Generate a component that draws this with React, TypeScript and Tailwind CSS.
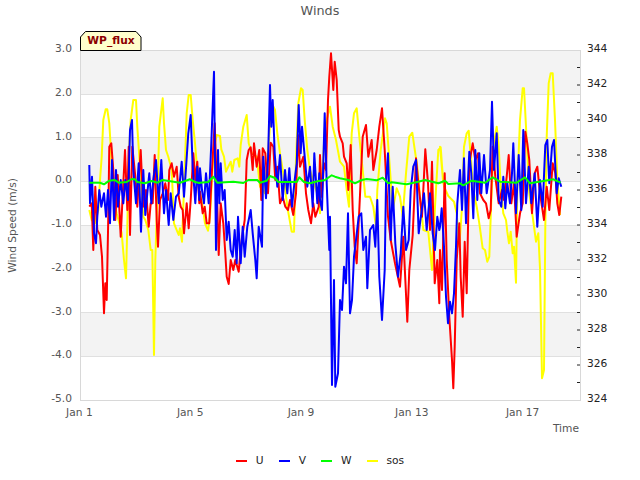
// Winds chart: traces are read off the picture in four panels (zoomed 3x)
type Panel = { x0: number; y0: number; pts: number[] };

const toPoints = (panels: Panel[]) =>
  panels
    .flatMap((p) => {
      const out: string[] = [];
      for (let i = 0; i < p.pts.length; i += 2) {
        out.push(`${(p.x0 + p.pts[i] / 3).toFixed(1)},${(p.y0 + p.pts[i + 1] / 3).toFixed(1)}`);
      }
      return out;
    })
    .join(' ');

const sos = toPoints([
  { x0: 80, y0: 60, pts: [28,450,35,480,45,490,55,450,60,360,65,290,70,180,77,148,82,148,88,190,92,260,96,330,102,420,110,460,118,490,125,520,132,600,138,655,142,500,146,300,152,180,160,120,168,120,172,200,178,290,184,380,190,470,196,480,205,510,212,570,217,570,222,885,226,600,232,420,238,200,248,115,252,190,258,270,265,290,275,330,282,490,288,505,296,525,300,505,306,545,310,440,316,280,320,160,326,105,332,105,338,180,345,250,352,330,358,400] },
  { x0: 200, y0: 60, pts: [0,400,8,440,15,490,24,512,30,470,36,350,42,260,50,225,60,228,64,268,72,290,78,335,85,320,92,305,97,335,103,300,113,295,118,320,122,255,130,200,140,165,146,250,155,280,170,290,180,380,195,400,215,130,225,150,232,220,240,280,250,340,262,440,275,515,282,515,288,300,295,130,303,85,308,90,314,180,322,270,330,330,345,380,358,420] },
  { x0: 320, y0: 50, pts: [0,490,5,400,15,230,30,170,38,230,48,270,60,335,72,350,80,420,87,470,95,250,102,190,110,175,118,260,128,360,136,440,150,440,160,470,168,530,172,420,182,300,195,205,200,220,210,360,218,480,230,415,240,440,248,500,258,370,268,260,277,248,283,290,292,350,300,440,310,540,325,545,336,660,345,470,355,300,362,292,370,400] },
  { x0: 440, y0: 60, pts: [0,260,5,310,12,380,25,408,42,425,50,460,58,560,66,440,72,260,80,220,86,212,92,290,100,390,110,440,118,490,128,565,135,570,142,605,148,590,152,470,160,260,170,200,176,260,182,380,190,460,198,480,202,515,207,550,212,515,218,580,222,560,228,668,232,380,240,180,248,85,252,85,258,200,268,400,278,470,288,545,295,520,300,625,306,955,312,930,316,500,320,230,326,70,332,40,338,40,345,180,352,360,360,465] },
]);

const windU = toPoints([
  { x0: 80, y0: 60, pts: [28,440,35,430,40,570,46,380,52,510,60,525,66,590,72,760,76,670,80,720,85,470,88,260,94,250,100,330,106,480,113,345,122,530,127,430,135,270,142,450,146,260,150,525,157,260,165,340,172,440,182,270,190,440,198,390,206,500,212,430,218,430,224,285,230,480,234,560,240,420,248,400,256,370,264,420,268,330,275,310,282,350,290,320,296,410,302,440,308,450,312,520,320,430,326,505,332,420,340,280,346,360,352,305,358,430] },
  { x0: 200, y0: 60, pts: [0,395,8,460,14,440,20,490,28,490,36,330,44,190,50,370,56,585,62,430,70,490,76,580,80,650,86,672,92,600,100,630,106,600,116,635,125,540,134,480,140,300,146,270,152,262,158,330,162,250,170,320,178,270,184,420,188,265,196,280,204,400,212,248,220,260,226,360,232,320,240,430,248,410,256,440,264,450,270,420,280,465,288,400,294,225,300,320,310,290,318,400,325,450,333,490,340,430,346,470,356,440] },
  { x0: 320, y0: 50, pts: [0,315,5,440,12,340,18,360,24,150,28,80,33,10,40,120,44,35,50,90,56,240,60,260,68,280,72,320,80,340,85,420,92,285,98,480,104,590,110,640,118,480,128,260,138,225,145,320,155,270,160,360,170,300,178,230,186,175,194,300,204,500,212,570,225,640,240,710,250,560,262,815,268,660,278,555,288,325,296,410,306,500,316,298,324,400,330,540,336,335,344,700,352,630,358,760] },
  { x0: 440, y0: 60, pts: [0,570,6,690,14,340,20,600,28,770,36,900,40,985,44,860,50,600,58,490,62,650,68,770,74,545,80,700,88,310,98,250,106,300,114,280,120,400,130,420,138,430,146,475,152,450,158,260,166,350,176,430,186,390,192,420,200,350,206,285,214,430,222,370,230,530,240,460,248,430,256,215,262,250,268,300,276,460,284,340,292,320,300,400,312,480,320,380,328,450,338,310,346,340,352,430,358,465,364,410] },
]);

const windV = toPoints([
  { x0: 80, y0: 60, pts: [28,315,30,430,36,350,42,520,48,550,52,470,58,390,64,440,72,400,78,470,84,390,90,490,96,300,102,480,108,330,114,440,122,360,130,430,136,360,144,420,150,210,156,180,160,330,168,430,176,310,183,515,190,330,196,465,202,400,208,340,214,430,220,360,228,300,236,430,244,300,252,460,258,390,266,495,272,400,280,480,288,410,296,400,305,305,312,410,318,325,325,220,332,165,338,320,346,430,352,320,358,420] },
  { x0: 200, y0: 60, pts: [0,325,6,390,12,430,18,340,26,430,34,250,42,35,48,570,54,270,58,430,62,310,68,420,74,390,80,540,86,485,92,570,98,590,104,510,110,610,114,470,122,610,128,500,134,590,142,500,152,450,158,520,166,600,170,655,176,500,186,560,190,290,198,415,204,300,210,75,214,200,218,120,224,280,232,380,240,285,248,420,255,330,262,400,268,325,276,440,284,360,290,310,296,135,302,280,306,200,314,290,322,380,330,320,338,440,343,280,352,430,358,340] },
  { x0: 320, y0: 50, pts: [0,450,6,480,14,190,20,400,28,600,30,500,36,1005,42,690,46,1010,54,970,60,750,66,780,72,650,78,700,84,490,90,790,96,750,102,620,108,570,116,500,124,490,130,600,138,560,142,715,150,540,160,525,166,590,172,450,178,680,186,810,194,660,198,400,204,310,212,570,218,410,226,580,234,680,242,610,250,470,258,600,266,570,272,420,280,350,288,330,296,550,304,490,312,430,320,540,330,430,338,550,345,600,352,500,358,540] },
  { x0: 440, y0: 60, pts: [0,500,5,445,12,560,18,710,24,790,30,725,36,760,42,700,48,560,52,430,60,330,66,450,72,295,78,490,88,275,94,340,100,475,106,270,112,420,118,280,124,400,132,285,140,400,150,330,156,125,162,330,170,220,176,420,184,440,190,350,196,445,202,370,210,430,216,340,220,250,228,460,236,285,244,450,250,210,258,430,266,320,274,430,284,340,292,500,300,360,308,440,316,255,322,240,328,370,336,260,342,240,350,400,356,355,364,380] },
]);

const windW = toPoints([
  { x0: 80, y0: 60, pts: [28,368,60,368,72,373,88,362,104,360,116,368,140,366,155,357,165,358,172,366,195,370,215,363,232,368,248,360,285,366,300,368,330,358,345,366,358,369] },
  { x0: 200, y0: 60, pts: [0,368,25,366,40,350,52,368,75,367,100,365,130,369,145,360,172,360,180,368,200,362,210,348,225,354,235,366,290,366,298,352,312,366,330,370,358,362] },
  { x0: 320, y0: 50, pts: [0,393,15,390,35,376,45,380,60,385,85,390,105,400,125,390,140,387,170,391,188,383,205,400,215,397,260,403,295,395,315,390,355,400] },
  { x0: 440, y0: 60, pts: [0,368,15,362,25,372,60,370,70,376,95,362,135,368,158,352,180,365,230,368,255,352,270,370,315,362,340,358,362,368] },
]);

const bands = [50, 137, 225, 312];
const gridLines = [94, 137, 181, 225, 269, 312, 356];
const leftTicks = ['3.0', '2.0', '1.0', '0.0', '-1.0', '-2.0', '-3.0', '-4.0', '-5.0'];
const rightTicks = ['344', '342', '340', '338', '336', '334', '332', '330', '328', '326', '324'];
const dates = ['Jan 1', 'Jan 5', 'Jan 9', 'Jan 13', 'Jan 17'];
const legend = [
  { name: 'U', color: 'bg-[#ff0000]' },
  { name: 'V', color: 'bg-[#0000ff]' },
  { name: 'W', color: 'bg-[#00ff00]' },
  { name: 'sos', color: 'bg-[#ffff00]' },
];

function Plot() {
  return (
    <svg width="501" height="351" viewBox="80 50 501 351" className="block shrink-0">
      <rect x="80" y="50" width="500" height="350" fill="#ffffff" />
      {bands.map((y) => (
        <rect key={y} x="80" y={y} width="500" height="44" fill="#f3f3f3" />
      ))}
      {gridLines.map((y) => (
        <line key={y} x1="80" x2="580" y1={y + 0.5} y2={y + 0.5} stroke="#e0e0e0" />
      ))}
      <rect x="80.5" y="50.5" width="500" height="350" fill="none" stroke="#d8d8d8" />
      {Array.from({ length: 19 }, (_, i) => 67.5 + i * 17.5).map((y) => (
        <line key={y} x1="577" x2="580" y1={y} y2={y} stroke="#222222" />
      ))}
      <g fill="none" strokeWidth="2" strokeLinejoin="round">
        <polyline points={sos} stroke="#ffff00" />
        <polyline points={windU} stroke="#ff0000" />
        <polyline points={windV} stroke="#0000ff" />
        <polyline points={windW} stroke="#00ff00" />
      </g>
    </svg>
  );
}

export default function App() {
  return (
    <div className="relative w-[640px] h-[480px] bg-white overflow-hidden font-['DejaVu_Sans',sans-serif] text-[10.67px] leading-[14px] text-[#555555]">
      <div className="h-[50px] pt-[3px] text-center text-[12.8px] leading-[16px]">Winds</div>

      {/* WP_flux tag sits on top of the plot corner */}
      <div className="absolute left-[80px] top-[31px] w-[62px] h-[20px] flex items-center justify-center">
        <svg width="62" height="20" viewBox="0 0 62 20" className="absolute inset-0">
          <polygon points="0.5,19.5 0.5,6 5.5,0.5 56,0.5 61,6 61,19.5" fill="#ffffcc" stroke="#000000" />
        </svg>
        <span className="relative font-bold text-[#8b0000]">WP_flux</span>
      </div>

      <div className="flex items-start h-[351px]">
        <div className="w-[26px] h-[351px] flex items-center justify-center">
          <span className="[writing-mode:vertical-rl] rotate-180 whitespace-nowrap">Wind Speed (m/s)</span>
        </div>
        <div className="w-[46px] h-[364px] -mt-[8px] mr-[8px] flex flex-col justify-between items-end">
          {leftTicks.map((t) => (
            <span key={t}>{t}</span>
          ))}
        </div>
        <Plot />
        <div className="h-[364px] -mt-[8px] ml-[6px] flex flex-col justify-between text-[#222222]">
          {rightTicks.map((t) => (
            <span key={t}>{t}</span>
          ))}
        </div>
      </div>

      <div className="flex pl-[24px] pt-[5px]">
        {dates.map((d) => (
          <span key={d} className="w-[110.8px] text-center">
            {d}
          </span>
        ))}
      </div>
      <div className="w-[579px] mt-[2px] text-right">Time</div>

      <div className="mt-[18px] flex justify-center gap-[15px] text-[#222222]">
        {legend.map((l) => (
          <div key={l.name} className="flex items-center gap-[9px]">
            <span className={`block w-[11px] h-[2px] ${l.color}`} />
            <span>{l.name}</span>
          </div>
        ))}
      </div>
    </div>
  );
}
